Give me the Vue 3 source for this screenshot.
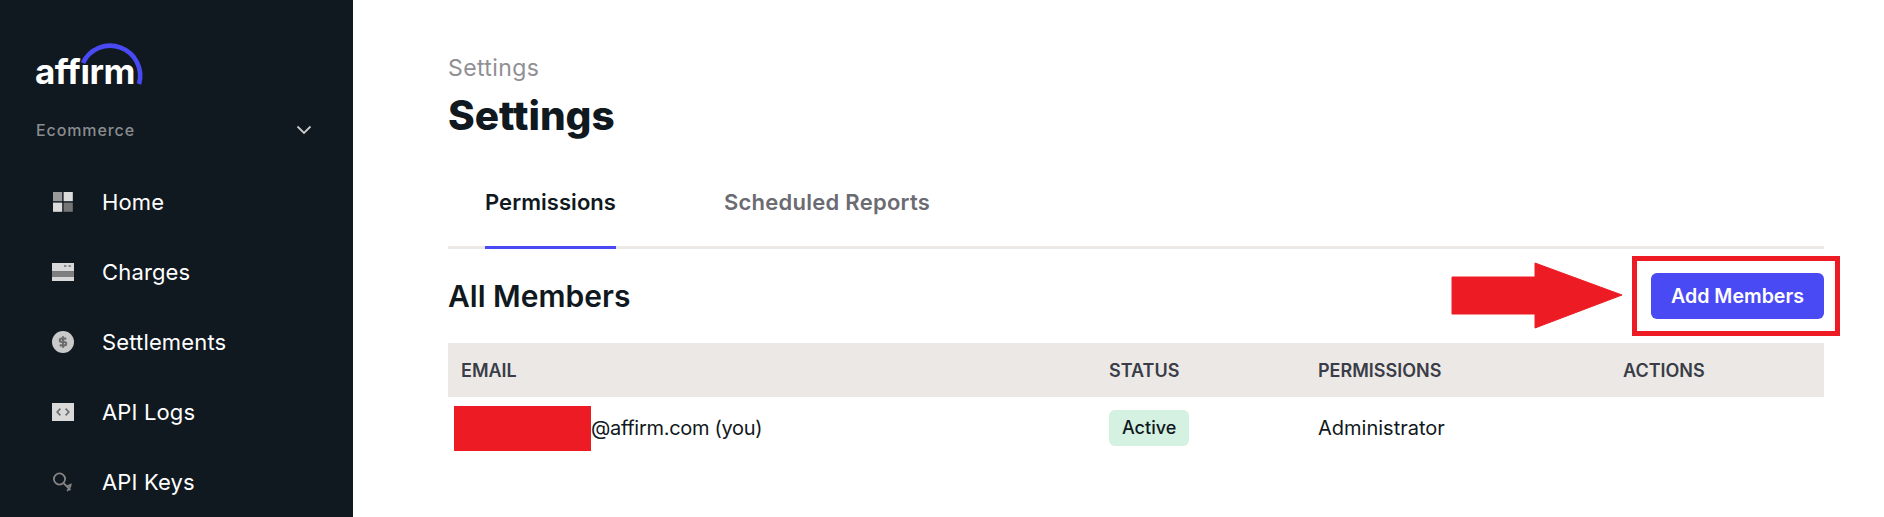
<template>
  <div class="page">
    <aside class="sidebar">
      <div class="logo">
        <span class="logo-text">affırm</span>
        <svg class="logo-arc" width="68" height="48" viewBox="0 0 68 48">
          <path d="M6 23 A30 30 0 0 1 62 44" fill="none" stroke="#4a4af4" stroke-width="4.6" />
        </svg>
      </div>
      <div class="product">
        <span>Ecommerce</span>
        <svg width="16" height="10" viewBox="0 0 16 10">
          <path d="M1.5 1.5 L8 8 L14.5 1.5" fill="none" stroke="#c9cbcc" stroke-width="1.8" />
        </svg>
      </div>
      <nav class="nav">
        <a v-for="item in navItems" :key="item.label" class="nav-item">
          <span class="nav-icon">
            <svg v-if="item.icon === 'home'" width="22" height="22" viewBox="0 0 22 22">
              <rect x="1" y="1" width="9.2" height="9.2" fill="#9a9a9a" />
              <rect x="11.6" y="1" width="9.2" height="9.2" fill="#dcdcdc" />
              <rect x="1" y="11.6" width="9.2" height="9.2" fill="#dcdcdc" />
              <rect x="11.6" y="11.6" width="9.2" height="9.2" fill="#757575" />
            </svg>
            <svg v-else-if="item.icon === 'charges'" width="22" height="22" viewBox="0 0 22 22">
              <rect x="0" y="2" width="22" height="8.5" fill="#d8d8d8" />
              <rect x="0" y="10.5" width="22" height="5.5" fill="#7f7f7f" />
              <rect x="0" y="16" width="22" height="4" fill="#d8d8d8" />
              <rect x="12" y="4" width="2.4" height="2" fill="#8a8a8a" />
              <rect x="16.5" y="4" width="2.4" height="2" fill="#8a8a8a" />
            </svg>
            <svg v-else-if="item.icon === 'settlements'" width="22" height="22" viewBox="0 0 22 22">
              <circle cx="11" cy="11" r="11" fill="#c9c9c9" />
              <path d="M14.3 7.6 H9.6 Q7.8 7.6 7.8 9.3 Q7.8 11 9.6 11 H12.4 Q14.2 11 14.2 12.7 Q14.2 14.4 12.4 14.4 H7.7 M11 5.2 V16.8" fill="none" stroke="#6d6d6d" stroke-width="2.1" />
            </svg>
            <svg v-else-if="item.icon === 'logs'" width="22" height="22" viewBox="0 0 22 22">
              <rect x="0" y="2" width="22" height="18" fill="#d9d9d9" />
              <path d="M8.4 7.6 L5.2 11 L8.4 14.4 M13.6 7.6 L16.8 11 L13.6 14.4" fill="none" stroke="#707070" stroke-width="1.7" />
            </svg>
            <svg v-else width="22" height="22" viewBox="0 0 22 22">
              <circle cx="7.5" cy="8" r="5.6" fill="none" stroke="#858585" stroke-width="1.8" />
              <path d="M11.5 12.2 L18.5 19 M15 15.4 L18.6 13.8 L18 16.6 M15 19.8 L18 17.4" fill="none" stroke="#858585" stroke-width="1.8" />
            </svg>
          </span>
          <span>{{ item.label }}</span>
        </a>
      </nav>
    </aside>

    <main class="main">
      <div class="crumb">Settings</div>
      <h1 class="title">Settings</h1>

      <div class="tabs">
        <a class="tab active">Permissions</a>
        <a class="tab">Scheduled Reports</a>
      </div>

      <div class="section-head">
        <h2>All Members</h2>
        <div class="callout">
          <svg class="arrow" width="172" height="67" viewBox="0 0 172 67">
            <path d="M1 15 H84 V1 L171 33 L84 66 V52 H1 Z" fill="#ed1c24" stroke="#ed1c24" stroke-width="1" />
          </svg>
          <div class="red-frame">
            <button class="btn-primary">Add Members</button>
          </div>
        </div>
      </div>

      <div class="table">
        <div class="table-row table-head">
          <div v-for="col in columns" :key="col">{{ col }}</div>
        </div>
        <div class="table-row">
          <div class="email">
            <span class="redact"></span>
            <span class="email-text">@affirm.com (you)</span>
          </div>
          <div><span class="badge">Active</span></div>
          <div>Administrator</div>
          <div></div>
        </div>
      </div>
    </main>
  </div>
</template>

<script setup>
const navItems = [
  { label: 'Home', icon: 'home' },
  { label: 'Charges', icon: 'charges' },
  { label: 'Settlements', icon: 'settlements' },
  { label: 'API Logs', icon: 'logs' },
  { label: 'API Keys', icon: 'keys' }
]

const columns = ['EMAIL', 'STATUS', 'PERMISSIONS', 'ACTIONS']
</script>

<style>
html,
body {
  margin: 0;
  background: #fff;
  overflow: hidden;
}
</style>

<style scoped>
.page {
  display: flex;
  height: 517px;
  overflow: hidden;
  font-family: Inter, "Liberation Sans", sans-serif;
  color: #101820;
}

.sidebar {
  width: 353px;
  flex-shrink: 0;
  box-sizing: border-box;
  padding: 0 36px;
  background: #101820;
  color: #fff;
}

.logo {
  position: relative;
  height: 92px;
}

.logo-text {
  position: absolute;
  left: -1px;
  top: 49px;
  font-size: 35px;
  line-height: 44px;
  font-weight: 700;
  letter-spacing: -0.5px;
}

.logo-arc {
  position: absolute;
  left: 41px;
  top: 40px;
}

.product {
  display: flex;
  justify-content: space-between;
  align-items: center;
  height: 75px;
  box-sizing: border-box;
  padding-right: 5px;
  font-size: 16px;
  font-weight: 500;
  letter-spacing: 0.9px;
  color: #8a8d90;
}

.nav {
  display: flex;
  flex-direction: column;
}

.nav-item {
  display: flex;
  align-items: center;
  height: 70px;
  padding-left: 16px;
  gap: 28px;
  font-size: 22px;
  letter-spacing: 0.15px;
}

.nav-icon {
  display: flex;
  width: 22px;
  height: 22px;
}

.main {
  flex: 1;
  padding: 0 60px 0 95px;
  min-width: 0;
}

.crumb {
  padding-top: 54px;
  font-size: 23px;
  line-height: 28px;
  letter-spacing: 0.4px;
  color: #8f8f94;
}

.title {
  margin: 9px 0 0;
  font-size: 40.5px;
  line-height: 50px;
  font-weight: 800;
}

.tabs {
  display: flex;
  gap: 108px;
  height: 108px;
  box-sizing: border-box;
  padding-left: 37px;
  border-bottom: 3px solid #ece8e5;
}

.tab {
  height: 108px;
  box-sizing: border-box;
  padding-top: 46px;
  font-size: 22px;
  line-height: 30px;
  font-weight: 600;
  letter-spacing: 0.25px;
  color: #6b6b73;
}

.tab.active {
  color: #101820;
  letter-spacing: 0.05px;
  border-bottom: 3px solid #4a4af4;
}

.section-head {
  display: flex;
  justify-content: space-between;
  align-items: center;
  height: 94px;
}

.section-head h2 {
  margin: 0;
  font-size: 30px;
  font-weight: 600;
}

.callout {
  display: flex;
  align-items: center;
  gap: 9px;
  margin-right: -16px;
}

.arrow {
  margin-bottom: 2px;
}

.red-frame {
  box-sizing: border-box;
  width: 208px;
  height: 80px;
  padding: 12px 11px 0 14px;
  border: 5px solid #ed1c24;
}

.btn-primary {
  width: 173px;
  height: 46px;
  border: none;
  border-radius: 6px;
  background: #4a4af4;
  color: #fff;
  font-family: inherit;
  font-size: 19.6px;
  font-weight: 600;
}

.table-row {
  display: grid;
  grid-template-columns: 648px 209px 305px 1fr;
  align-items: center;
  height: 62px;
  padding-left: 13px;
  font-size: 20px;
}

.table-head {
  height: 54px;
  background: #ece8e5;
  color: #3a3d48;
  font-size: 18px;
  font-weight: 600;
}

.email {
  display: flex;
  align-items: center;
}

.email-text {
  letter-spacing: -0.3px;
}

.redact {
  width: 137px;
  height: 45px;
  margin-left: -7px;
  background: #ed1c24;
}

.badge {
  display: inline-block;
  padding: 0 13px;
  line-height: 36px;
  border-radius: 6px;
  background: #d4f1e2;
  font-size: 18px;
  font-weight: 500;
}
</style>
